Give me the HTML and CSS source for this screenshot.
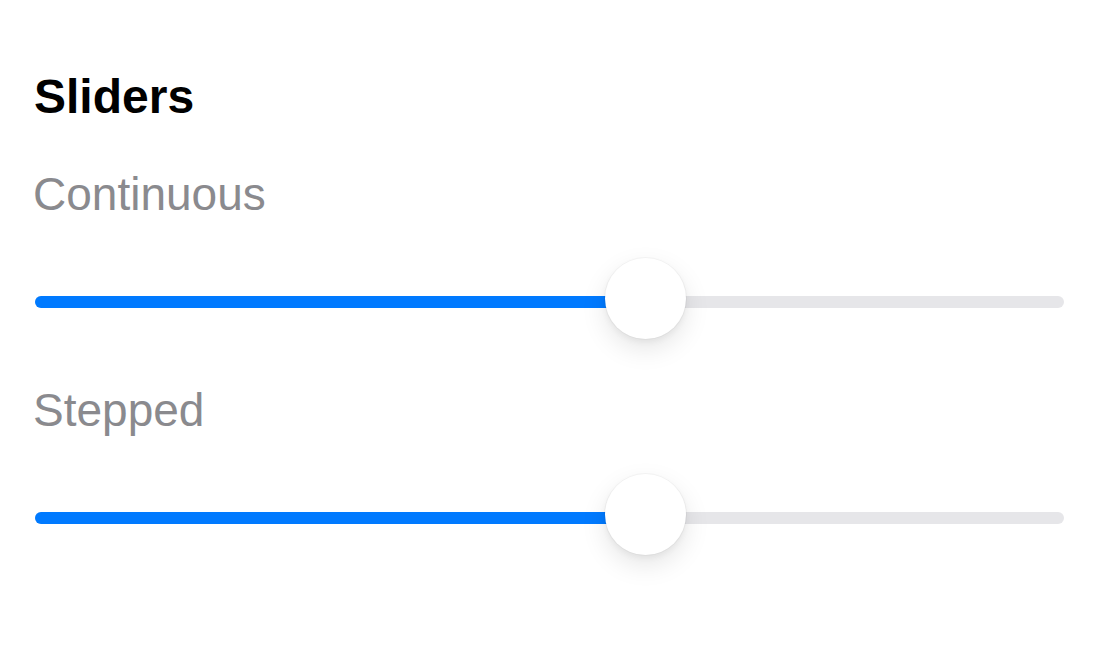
FILE: index.html
```html
<!DOCTYPE html>
<html lang="en">
<head>
  <meta charset="UTF-8">
  <title>Sliders</title>
  <link rel="stylesheet" href="styles.css">
</head>
<body>
  <main class="page">
    <h2 class="title">Sliders</h2>

    <!-- Continuous slider -->
    <section class="group">
      <div class="label">Continuous</div>
      <div class="slider">
        <div class="track"><div class="fill" style="width: 59.3%;"></div></div>
        <div class="thumb" style="left: calc(59.3% - 40px);"></div>
      </div>
    </section>

    <!-- Stepped slider -->
    <section class="group">
      <div class="label">Stepped</div>
      <div class="slider">
        <div class="track"><div class="fill" style="width: 59.3%;"></div></div>
        <div class="thumb" style="left: calc(59.3% - 40px);"></div>
      </div>
    </section>
  </main>
</body>
</html>
```

FILE: styles.css
```css
body {
  margin: 0;
  background: #fff;
  font-family: "Liberation Sans", Arial, sans-serif;
}
.page {
  padding: 69px 36px 40px 35px;
}
.title {
  margin: 0 0 0 -1px;
  font-size: 48px;
  line-height: 56px;
  font-weight: bold;
  color: #000;
}
.group {
  margin-top: 43px;
}
.group + .group {
  margin-top: 44px;
}
.label {
  margin-left: -2px;
  font-size: 46px;
  line-height: 52px;
  color: #8a8a8e;
}
.slider {
  position: relative;
  box-sizing: border-box;
  height: 82px;
  margin-top: 38px;
  padding-top: 38px;
}
.track {
  height: 12px;
  border-radius: 6px;
  background: #e6e6e9;
  overflow: hidden;
}
.fill {
  height: 100%;
  background: #007aff;
}
.thumb {
  position: absolute;
  top: 0;
  width: 81px;
  height: 81px;
  border-radius: 50%;
  background: #fff;
  box-shadow: 0 10px 26px rgba(0, 0, 0, 0.1), 0 3px 6px rgba(0, 0, 0, 0.05), 0 0 0 1px rgba(0, 0, 0, 0.03);
}
```
